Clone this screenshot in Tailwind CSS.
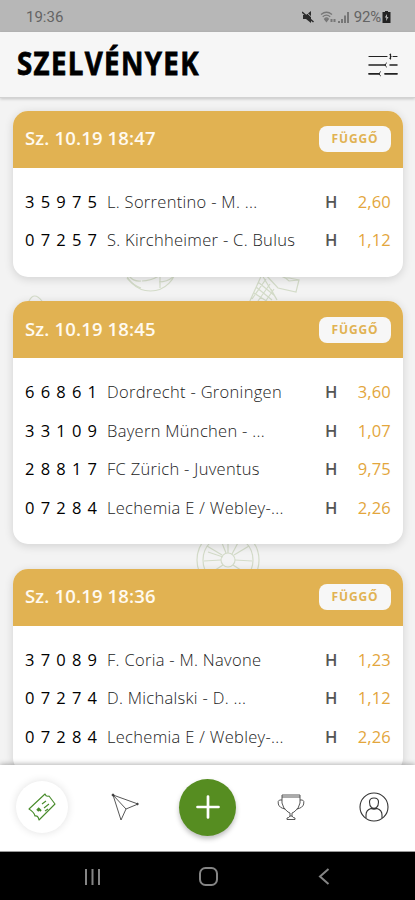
<!DOCTYPE html>
<html lang="hu">
<head>
    <meta charset="UTF-8">
    <meta name="viewport" content="width=device-width, initial-scale=1.0">
    <title>Szelvények</title>
    <!-- Tailwind CSS CDN -->
    <script src="https://cdn.jsdelivr.net/npm/@tailwindcss/browser@4"></script>
</head>
<body class="flex flex-col h-[900px] w-[415px] overflow-hidden bg-[#f3f3f3] font-['Open_Sans',sans-serif] text-black">

    <!-- Status bar -->
    <div class="flex shrink-0 items-center justify-between h-8 pl-[26px] pr-6 pt-[2px] bg-[#b7b7b7] font-['Roboto',sans-serif] text-[15px] text-[#646464]">
        <span>19:36</span>
        <div class="flex items-center">
            <svg class="w-3 h-3" viewBox="0 0 12 12">
                <path d="M1 4h3l5-4v12L4 8H1z" fill="#2c2c2c"/>
                <path d="M0 1l11.500 10" stroke="#2c2c2c" stroke-width="1.500"/>
                <path d="M3 0l8 7.500" stroke="#b7b7b7" stroke-width="1"/>
            </svg>
            <svg class="w-4 h-3 ml-[6px]" viewBox="0 0 16 12" fill="none" stroke="#777" stroke-width="1.300">
                <path d="M1 3.500q5.500-4.500 11 0M2.700 5.700q3.800-3 7.500 0M4.500 7.800q2-1.600 4 0"/>
                <path d="M5 8.500l1.500 2L8 8.500z" fill="#777"/>
                <path d="M11.500 8v3M14.500 8v3" stroke-width="2"/>
            </svg>
            <svg class="w-[11px] h-3 ml-[2px]" viewBox="0 0 11 12" stroke="#6c6c6c" stroke-width="1.700">
                <path d="M1 12v-2M4 12V8M7 12V4.500M10 12V1"/>
            </svg>
            <span class="ml-[5px] tracking-[-0.2px]">92%</span>
            <svg class="w-[9px] h-3 ml-px" viewBox="0 0 8 12">
                <path d="M2.500 0h3v1H8v11H0V1h2.500z" fill="#222"/>
                <path d="M4.500 3L2.300 6.500h1.500L3.500 10l2.500-4H4.500z" fill="#b7b7b7"/>
            </svg>
        </div>
    </div>

    <!-- Header -->
    <header class="relative z-10 flex shrink-0 items-center justify-between h-[66px] pl-[17px] pr-[17px] bg-[#f6f6f6] border-b border-[#d2d2d2] shadow-[0_1px_3px_rgba(0,0,0,0.2)]">
        <h1 class="origin-left scale-x-[0.85] pb-[3px] text-[32.5px] leading-none font-bold tracking-[1.6px] [-webkit-text-stroke:0.8px_black] [stroke-linejoin:round]">SZELVÉNYEK</h1>
        <svg class="w-[30px] h-6" viewBox="0 0 30 24" fill="none" stroke="#222" stroke-linecap="round">
            <path d="M1 3.500h18M25 3.500h4M22.500 1v5" stroke-width="1.200"/>
            <path d="M22 1.500q2.500 2 0 4" stroke-width="1"/>
            <path d="M1 12h16M22 12h7" stroke-width="1.500"/>
            <path d="M18.500 10q-3 2 0 4" stroke-width="1"/>
            <path d="M1 20.800h10M17 20.800h12" stroke-width="1.800"/>
            <path d="M12.500 18.800q-3 2 0 4" stroke-width="1"/>
        </svg>
    </header>

    <!-- Ticket list -->
    <main class="relative flex-1 min-h-0 overflow-hidden">
        <svg class="absolute inset-0 w-[415px] h-[667px]" viewBox="0 98 415 667" fill="none" stroke="#d3dbc8" stroke-width="1.200">
            <!-- ball -->
            <circle cx="150.500" cy="265" r="26"/>
            <path d="M129 276q5 6 12 5M142 281q8 0 17-5M160 277v11M127 278q7 8 14 10M159 282q8 0 14-5"/>
            <!-- shuttlecock -->
            <path d="M263 272l-14 31M262 275l15 25M277 274l8 4 4 0 10 2-3 12-18-4-14-15M283 276l6 5 10-1M277 300l-6-11M258 282l17 14M256 287l16 13M254 293l14 9M266 279l-14 20M270 284l-12 17M274 289l-9 13"/>
            <path d="M29 301q5-10 13 0"/>
            <!-- wheel -->
            <circle cx="228" cy="560" r="31"/>
            <circle cx="228" cy="560" r="25"/>
            <circle cx="228" cy="560" r="7"/>
            <path d="M228 553v-17M226 553l-6-15M232 554l8-15M222 555l-15-9M223 557l-15-5M234 555l15-9M235 560l17 1M221 560l-17 1M233 565l14 9M223 565l-14 9"/>
        </svg>
        <div id="tickets" class="relative flex flex-col gap-[24.5px] pt-[12.5px] pl-[13px] pr-3"></div>
    </main>

    <!-- Bottom navigation -->
    <nav class="relative z-10 grid shrink-0 grid-cols-5 items-center justify-items-center h-[87px] pb-[2px] bg-white border-b border-[#999] shadow-[0_-1px_5px_rgba(0,0,0,0.3)]">
        <a class="flex items-center justify-center size-[52px] rounded-full bg-white shadow-[0_0_9px_rgba(0,0,0,0.12)]">
            <svg class="size-8" viewBox="0 0 32 32" fill="none" stroke="#488b2b" stroke-width="1.100" stroke-linejoin="round">
                <path d="M3 18L19 3q1 3 4 2l6 8-16 16q-1-5-4-4-1-4-6-7z"/>
                <path d="M16 13l4-3M18 17l5-4M19 20l3-2"/>
                <path d="M12 17l3 3M13 20l-2-2" stroke-width="2"/>
            </svg>
        </a>
        <svg class="size-[30px]" viewBox="0 0 30 30" fill="none" stroke="#444" stroke-width="0.900" stroke-linejoin="round">
            <path d="M3 3l25 9-12 5-5 11zM3 3l13 14"/>
            <circle cx="3" cy="3" r="1" fill="#222"/>
            <circle cx="27.500" cy="12" r=".8" fill="#222"/>
        </svg>
        <a class="flex items-center justify-center size-[57px] rounded-full bg-[#568d21] shadow-[0_3px_5px_rgba(0,0,0,0.25)]">
            <svg class="size-6" viewBox="0 0 24 24" stroke="#fff" stroke-width="2.700" stroke-linecap="round">
                <path d="M12 1.500v21M1.500 12h21"/>
            </svg>
        </a>
        <svg class="size-7" viewBox="0 0 28 28" fill="none" stroke="#444" stroke-width="0.900" stroke-linejoin="round">
            <path d="M5 2h18v2H5zM5 4v6q1 6 6 9l2 1v3h2v-3l2-1q5-3 6-9V4M13 23q-1 2-3 2v1.500h8V25q-2 0-3-2"/>
            <path d="M5 7H2.500Q.5 8 1.300 11q1 4 7 5M23 7h2.500q2 1 1.200 4-1 4-7 5"/>
        </svg>
        <svg class="size-[30px]" viewBox="0 0 30 30" fill="none" stroke="#333" stroke-width="1.100">
            <circle cx="15" cy="15" r="14"/>
            <path d="M10.500 10q0-4 4.500-4t4.500 4-2 5.500q-2.500 1.500-5 0-2-1.500-2-5.500zM7 26v-3q0-5 5-6.500 3 1.500 6 0 5 1.500 5 6.500v3"/>
        </svg>
    </nav>

    <!-- System buttons -->
    <div class="flex shrink-0 items-center justify-between h-12 pl-[84px] pr-[85px] pt-px bg-black">
        <svg class="w-[17px] h-4" viewBox="0 0 17 16" stroke="#858585" stroke-width="2"><path d="M2 0v16M8.500 0v16M15 0v16"/></svg>
        <svg class="size-[19px] mr-[3px]" viewBox="0 0 19 19" fill="none" stroke="#858585" stroke-width="2"><rect x="1" y="1" width="17" height="17" rx="5.500"/></svg>
        <svg class="w-[12px] h-[17px]" viewBox="0 0 12 17" fill="none" stroke="#858585" stroke-width="2"><path d="M10.500 1L2 8.500l8.500 7.500"/></svg>
    </div>

    <script>
        const tickets = [
            { date: 'Sz. 10.19 18:47', bets: [
                ['35975', 'L. Sorrentino - M. ...', '2,60'],
                ['07257', 'S. Kirchheimer - C. Bulus', '1,12'],
            ] },
            { date: 'Sz. 10.19 18:45', bets: [
                ['66861', 'Dordrecht - Groningen', '3,60'],
                ['33109', 'Bayern München - ...', '1,07'],
                ['28817', 'FC Zürich - Juventus', '9,75'],
                ['07284', 'Lechemia E / Webley-...', '2,26'],
            ] },
            { date: 'Sz. 10.19 18:36', bets: [
                ['37089', 'F. Coria - M. Navone', '1,23'],
                ['07274', 'D. Michalski - D. ...', '1,12'],
                ['07284', 'Lechemia E / Webley-...', '2,26'],
            ] },
        ];

        document.getElementById('tickets').innerHTML = tickets.map(ticket => `
            <section class="rounded-[15px] bg-white shadow-[0_2px_10px_rgba(0,0,0,0.14)]">
                <div class="flex items-center justify-between h-[57px] px-3 rounded-t-[15px] bg-[#e1b252]">
                    <h2 class="pb-[2px] text-[18.5px] font-semibold tracking-[0.15px] text-[#fffaf0]">${ticket.date}</h2>
                    <span class="flex items-center justify-center w-[72px] h-[26px] rounded-lg bg-[#f7f7f7] text-[12px] font-bold tracking-[0.9px] text-[#e1b252]">FÜGGŐ</span>
                </div>
                <div class="pt-[15.5px] pb-[16.5px] pl-3 pr-3">
                    ${ticket.bets.map(([code, match, odds]) => `
                    <div class="flex items-center h-[38.5px] text-[16.5px] whitespace-nowrap">
                        <span class="w-[82px] font-medium tracking-[6.2px]">${code}</span>
                        <span class="flex-1 font-light tracking-[0.3px] text-[#222]">${match}</span>
                        <span class="w-[29px] font-semibold text-[#555]">H</span>
                        <span class="w-[37px] text-right font-medium tracking-[0.2px] text-[#e3a63c]">${odds}</span>
                    </div>`).join('')}
                </div>
            </section>`).join('');
    </script>
</body>
</html>
